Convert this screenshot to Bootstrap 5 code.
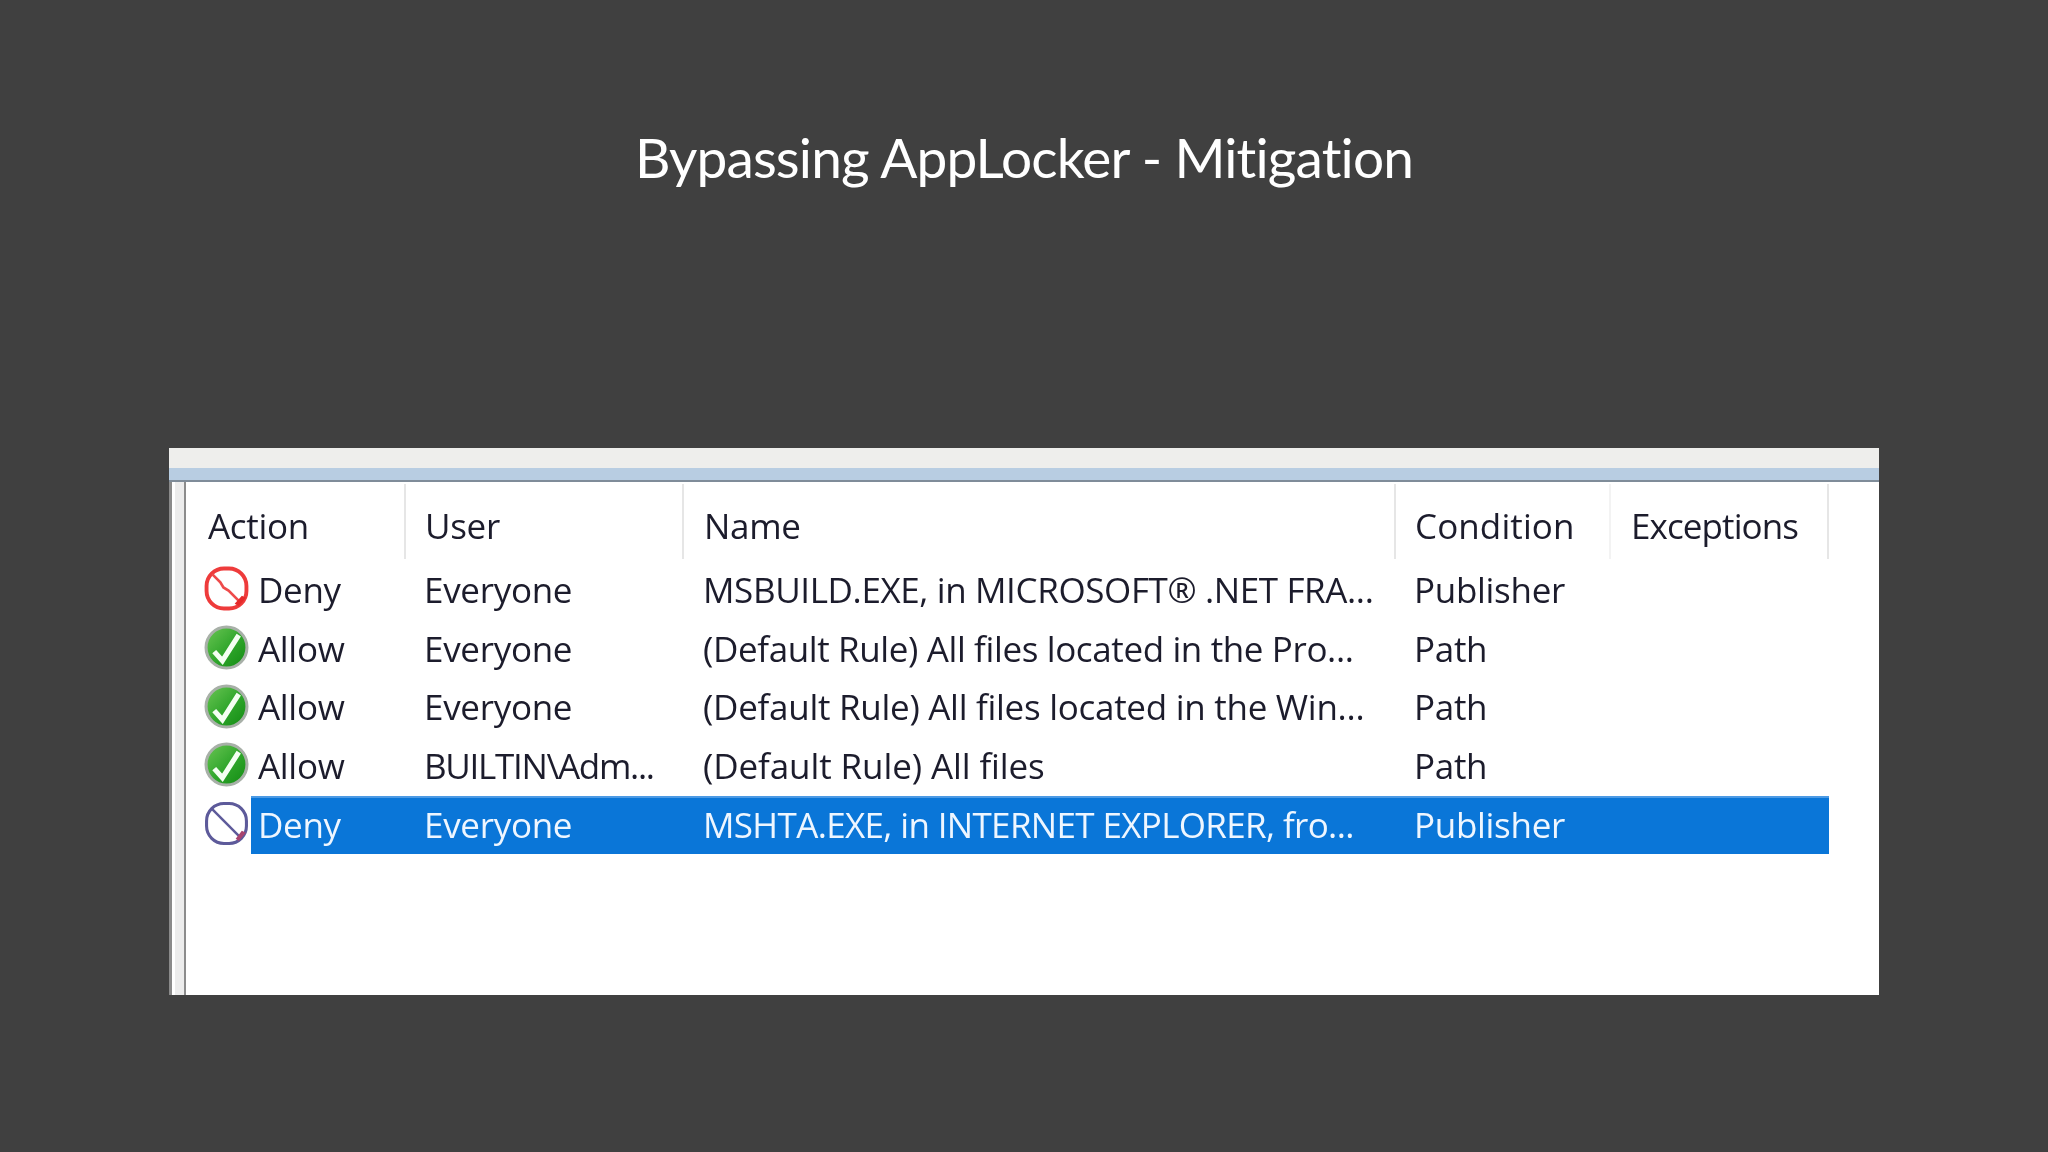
<!DOCTYPE html>
<html lang="en">
<head>
<meta charset="utf-8">
<title>Bypassing AppLocker - Mitigation</title>
<link href="https://cdn.jsdelivr.net/npm/bootstrap@5.3.0/dist/css/bootstrap.min.css" rel="stylesheet">
<style>
html,body{height:100%;}
body{background:#404040;width:2048px;height:1152px;overflow:hidden;}
.slide-title{font-family:Lato,"Liberation Sans",sans-serif;font-size:55px;font-weight:400;line-height:64px;color:#fff;text-align:center;margin:0;padding-top:125px;height:448px;letter-spacing:-.85px;}
.win-panel{width:1710px;height:547px;margin-left:169px;background:#fff;font-family:"Open Sans","Liberation Sans",sans-serif;font-size:35px;color:#1c1c2c;letter-spacing:-.3px;}
.band-grey{height:20px;background:#eeeeec;}
.band-blue{height:12px;background:#b8cde2;}
.band-line{height:2px;background:#7f8c99;}
.left-rail{width:17px;background:#ececec;border-left:3px solid #8a8a8a;box-shadow:inset 3px 0 0 #fff;border-right:2px solid #8c8c8c;}
.list-pane{min-width:0;}
.head-row{height:79px;padding-top:2px;}
.head-cell{height:75px;display:flex;align-items:center;padding-top:10px;border-right:2px solid #e6e6e6;padding-left:22px;}
.head-cell.faint{border-right-color:#f3f3f3;}
.w-action{width:220px;}
.w-user{width:278px;}
.w-name{width:712px;}
.w-cond{width:215px;}
.w-exc{width:218px;}
.head-cell.w-user,.head-cell.w-cond{padding-left:19px;}
.head-cell.w-name,.head-cell.w-exc{padding-left:20px;}
.ls-name{letter-spacing:-.38px;}
.tight-more{letter-spacing:-.9px;}
.tightest{letter-spacing:-1.3px;}
.loose-more{letter-spacing:.1px;}
.tight-some{letter-spacing:-.65px;}
.wide-some{letter-spacing:-.28px;}
.wide-most{letter-spacing:-.1px;}
.data-row{height:58.7px;line-height:58.7px;}
.icon-cell{width:65px;display:flex;align-items:center;padding-left:18px;}
.row-body{width:1578px;}
.row-body>span{display:block;white-space:nowrap;overflow:hidden;}
.c-act{width:154px;padding-left:7px;}
.c-usr{width:278px;padding-left:19px;}
.c-nam{width:712px;padding-left:20px;}
.c-con{width:215px;padding-left:19px;}
.c-exc{width:219px;}
.data-row.picked .row-body{background:#0a76d8;color:#eef6ff;box-shadow:inset 0 2px 0 #4c9ae4;}
.row-icon{width:45px;height:45px;flex:none;margin-top:-3px;}
.soft{filter:blur(.45px);}
</style>
</head>
<body>
<h1 class="slide-title">Bypassing AppLocker - Mitigation</h1>
<div class="win-panel d-flex flex-column">
  <div class="band-grey"></div>
  <div class="band-blue"></div>
  <div class="band-line"></div>
  <div class="d-flex flex-grow-1">
    <div class="left-rail"></div>
    <div class="list-pane flex-grow-1 soft">
      <div class="head-row d-flex">
        <div class="head-cell w-action">Action</div>
        <div class="head-cell w-user">User</div>
        <div class="head-cell w-name">Name</div>
        <div class="head-cell w-cond faint loose-more">Condition</div>
        <div class="head-cell w-exc tight-more">Exceptions</div>
      </div>
      <div class="data-row d-flex">
        <div class="icon-cell"><svg class="row-icon" viewBox="0 0 44 44"><rect x="2.5" y="2.5" width="39" height="39" rx="17" fill="#fff" stroke="#ee3b3b" stroke-width="3.8"/><path d="M8 8 L16 16 L19 21 L24 24 L36 36" fill="none" stroke="#ee4b4b" stroke-width="2.6"/><path d="M30 37 L37 29 L41 31 L34 39Z" fill="#e52a2a"/></svg></div>
        <div class="row-body d-flex"><span class="c-act">Deny</span><span class="c-usr">Everyone</span><span class="c-nam ls-name">MSBUILD.EXE, in MICROSOFT® .NET FRA...</span><span class="c-con">Publisher</span><span class="c-exc"></span></div>
      </div>
      <div class="data-row d-flex">
        <div class="icon-cell"><svg class="row-icon" viewBox="0 0 44 44"><defs><linearGradient id="gr" x1="0" y1="0" x2="1" y2="1"><stop offset="0" stop-color="#6cc655"/><stop offset=".55" stop-color="#2ea52a"/><stop offset="1" stop-color="#128a12"/></linearGradient></defs><circle cx="22" cy="22" r="20" fill="url(#gr)" stroke="#a8b0a8" stroke-width="3"/><path d="M10 26 L18 35 L34 10" fill="none" stroke="#f4fff2" stroke-width="5"/></svg></div>
        <div class="row-body d-flex"><span class="c-act">Allow</span><span class="c-usr">Everyone</span><span class="c-nam ls-name">(Default Rule) All files located in the Pro...</span><span class="c-con">Path</span><span class="c-exc"></span></div>
      </div>
      <div class="data-row d-flex">
        <div class="icon-cell"><svg class="row-icon" viewBox="0 0 44 44"><circle cx="22" cy="22" r="20" fill="url(#gr)" stroke="#a8b0a8" stroke-width="3"/><path d="M10 26 L18 35 L34 10" fill="none" stroke="#f4fff2" stroke-width="5"/></svg></div>
        <div class="row-body d-flex"><span class="c-act">Allow</span><span class="c-usr">Everyone</span><span class="c-nam wide-some">(Default Rule) All files located in the Win...</span><span class="c-con">Path</span><span class="c-exc"></span></div>
      </div>
      <div class="data-row d-flex">
        <div class="icon-cell"><svg class="row-icon" viewBox="0 0 44 44"><circle cx="22" cy="22" r="20" fill="url(#gr)" stroke="#a8b0a8" stroke-width="3"/><path d="M10 26 L18 35 L34 10" fill="none" stroke="#f4fff2" stroke-width="5"/></svg></div>
        <div class="row-body d-flex"><span class="c-act">Allow</span><span class="c-usr tightest">BUILTIN\Adm...</span><span class="c-nam wide-most">(Default Rule) All files</span><span class="c-con">Path</span><span class="c-exc"></span></div>
      </div>
      <div class="data-row picked d-flex">
        <div class="icon-cell"><svg class="row-icon" viewBox="0 0 44 44"><rect x="2.5" y="2.5" width="39" height="39" rx="17" fill="#fff" stroke="#5d5a9a" stroke-width="3"/><path d="M8 8 L36 36" fill="none" stroke="#5d5a9a" stroke-width="2.4"/><path d="M31 37 L37 29 L41 31 L34 39Z" fill="#a8436e"/></svg></div>
        <div class="row-body d-flex"><span class="c-act">Deny</span><span class="c-usr">Everyone</span><span class="c-nam tight-some">MSHTA.EXE, in INTERNET EXPLORER, fro...</span><span class="c-con">Publisher</span><span class="c-exc"></span></div>
      </div>
    </div>
  </div>
</div>
<script src="https://cdn.jsdelivr.net/npm/bootstrap@5.3.0/dist/js/bootstrap.bundle.min.js"></script>
</body>
</html>
